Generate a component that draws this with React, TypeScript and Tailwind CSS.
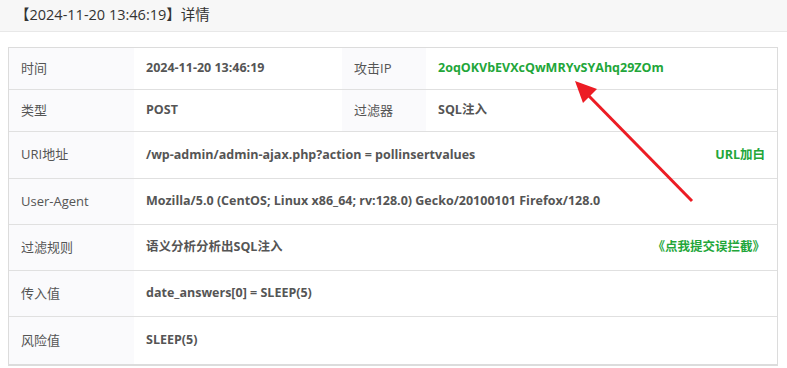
import React from 'react';

const font = { fontFamily: '"Open Sans", "Noto Sans CJK SC", sans-serif' };

type Row = { label: string; value: React.ReactNode; extra?: React.ReactNode; h: string };

const green = 'text-[#22a639] font-bold';
const val = 'font-bold text-[#555] text-[12.5px]';

const rows: Row[] = [
  { label: 'URI地址', value: '/wp-admin/admin-ajax.php?action = pollinsertvalues', extra: <span className={green}>URL加白</span>, h: 'h-[47px]' },
  { label: 'User-Agent', value: 'Mozilla/5.0 (CentOS; Linux x86_64; rv:128.0) Gecko/20100101 Firefox/128.0', h: 'h-[46px]' },
  { label: '过滤规则', value: '语义分析分析出SQL注入', extra: <span className={green}>《点我提交误拦截》</span>, h: 'h-[46px]' },
  { label: '传入值', value: 'date_answers[0] = SLEEP(5)', h: 'h-[46px]' },
  { label: '风险值', value: 'SLEEP(5)', h: 'h-[47px]' },
];

const Label = ({ children, w }: { children: React.ReactNode; w: string }) => (
  <div className={`${w} shrink-0 h-full flex items-center pl-3 bg-[#fafafc] text-[#555]`}>{children}</div>
);

export default function App() {
  return (
    <div className="relative w-[787px] h-[368px] bg-white overflow-hidden text-[13px]" style={font}>
      <div className="h-[32px] bg-[#f7f7f7] border-b border-[#e8e8e8] flex items-center pl-[15px] text-[14.5px] text-[#333] pb-[1px]">
        【2024-11-20 13:46:19】详情
      </div>

      <div className="ml-2 mt-[15px] w-[770px] border border-[#dcdcdc] border-b-2">
        <div className="flex h-[42px] items-center border-b border-[#e0e0e0]">
          <Label w="w-[125px]">时间</Label>
          <div className={`w-[208px] pl-3 ${val}`}>2024-11-20 13:46:19</div>
          <Label w="w-[84px]">攻击IP</Label>
          <div className={`pl-3 text-[12.5px] ${green}`}>2oqOKVbEVXcQwMRYvSYAhq29ZOm</div>
        </div>
        <div className="flex h-[42px] items-center border-b border-[#e0e0e0]">
          <Label w="w-[125px]">类型</Label>
          <div className={`w-[208px] pl-3 ${val}`}>POST</div>
          <Label w="w-[84px]">过滤器</Label>
          <div className={`pl-3 ${val}`}>SQL注入</div>
        </div>
        {rows.map((r, i) => (
          <div key={r.label} className={`flex ${r.h} items-center ${i < rows.length - 1 ? 'border-b border-[#e0e0e0]' : ''}`}>
            <Label w="w-[125px]">{r.label}</Label>
            <div className={`flex-1 pl-3 ${val}`}>{r.value}</div>
            {r.extra && <div className="pr-3 text-[12.5px]">{r.extra}</div>}
          </div>
        ))}
      </div>

      {/* annotation arrow pointing at the attacker IP */}
      <svg className="absolute left-0 top-0 pointer-events-none" width="787" height="368">
        <line x1="692" y1="201" x2="586" y2="93" stroke="#ec1c24" strokeWidth="3" />
        <polygon points="575,81 597,89 583,103" fill="#ec1c24" />
      </svg>
    </div>
  );
}
